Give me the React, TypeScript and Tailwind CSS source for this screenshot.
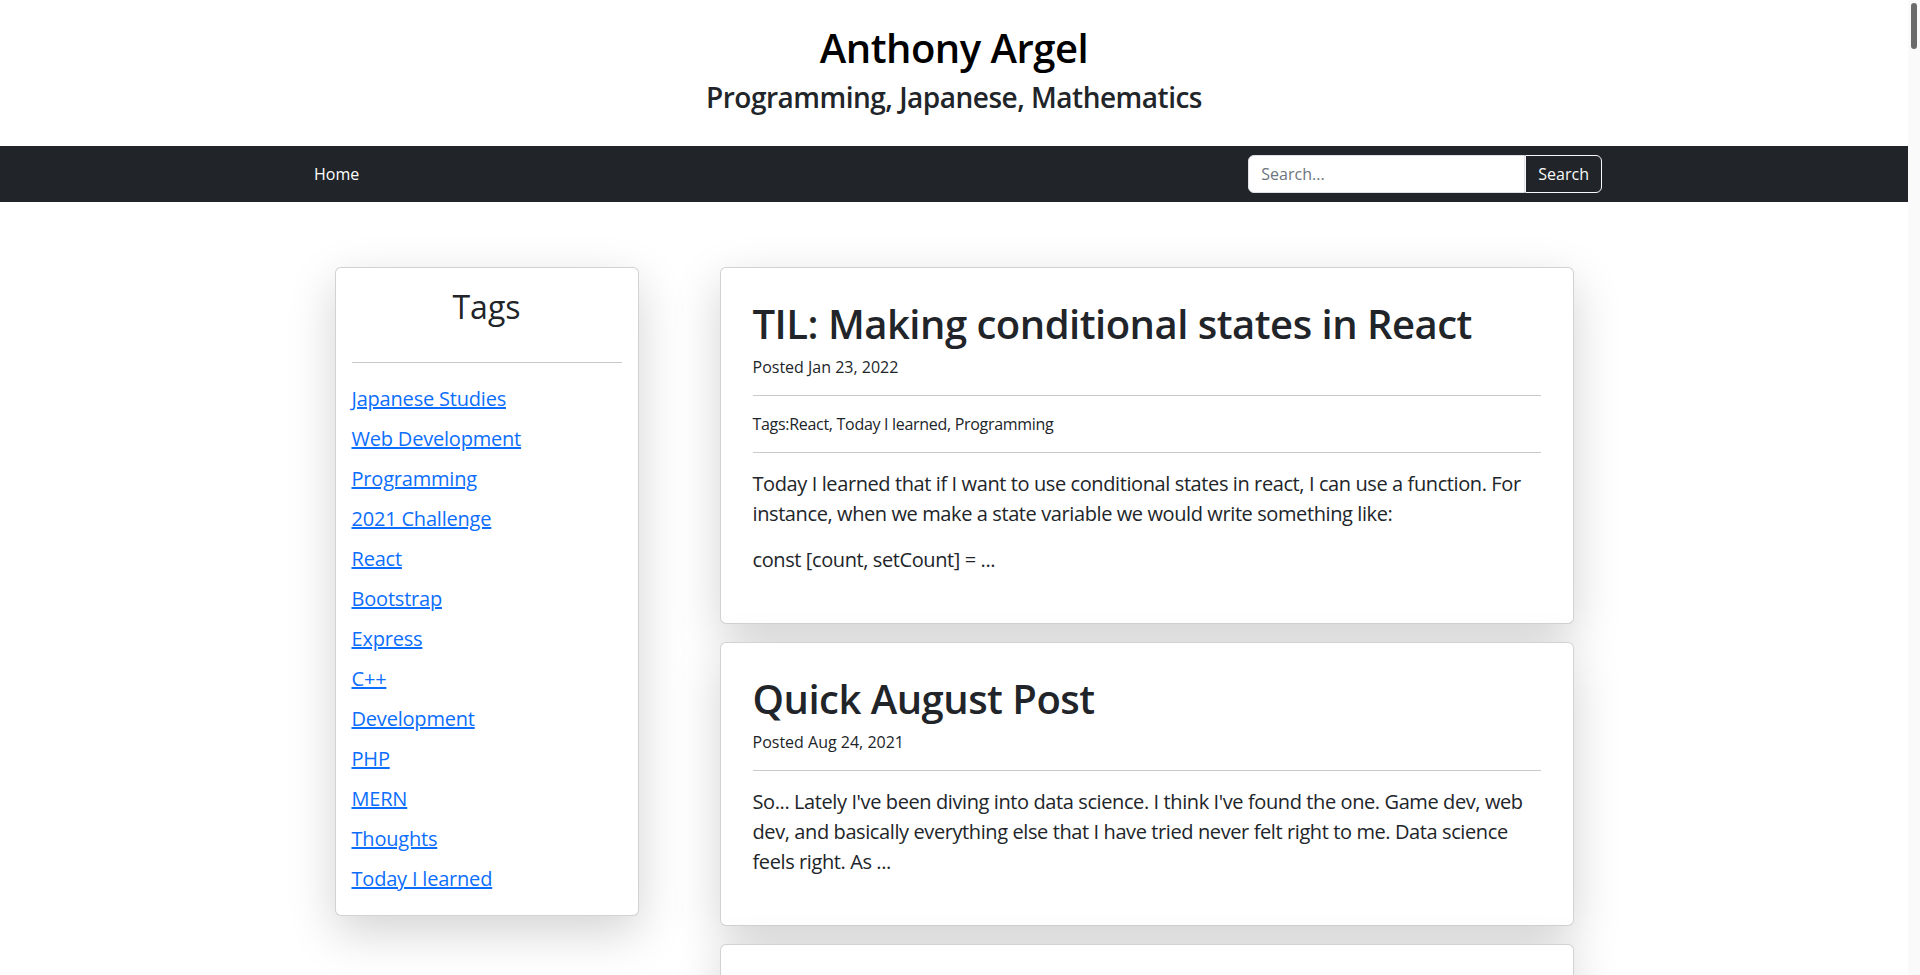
const tags = [
  'Japanese Studies',
  'Web Development',
  'Programming',
  '2021 Challenge',
  'React',
  'Bootstrap',
  'Express',
  'C++',
  'Development',
  'PHP',
  'MERN',
  'Thoughts',
  'Today I learned'
];

interface Post {
  readonly title: string;
  readonly date: string;
  readonly tags?: string;
  readonly body: string[];
}

const posts: Post[] = [
  {
    title: 'TIL: Making conditional states in React',
    date: 'Jan 23, 2022',
    tags: 'React, Today I learned, Programming',
    body: [
      'Today I learned that if I want to use conditional states in react, I can use a function. For instance, when we make a state variable we would write something like:',
      'const [count, setCount] = ...'
    ]
  },
  {
    title: 'Quick August Post',
    date: 'Aug 24, 2021',
    body: [
      "So... Lately I've been diving into data science. I think I've found the one. Game dev, web dev, and basically everything else that I have tried never felt right to me. Data science feels right. As ..."
    ]
  },
  {
    title: 'Back to Japanese Studies',
    date: 'Jul 02, 2021',
    tags: 'Japanese Studies, Thoughts',
    body: ['It has been a while since I last wrote about my Japanese studies ...']
  }
];

function PostCard({ post }: { readonly post: Post }) {
  return (
    <article className="rounded-[6px] border border-[rgba(0,0,0,0.175)] bg-white px-8 pt-8 pb-[32px] shadow-[0_16px_48px_rgba(0,0,0,0.175)]">
      <h1 className="mb-[7px] text-[40px] leading-[48px] font-semibold tracking-[-0.5px]">{post.title}</h1>
      <div className="text-base leading-6">Posted {post.date}</div>
      <hr className="my-4 border-[#c8c9ca]" />
      {post.tags && (
        <>
          <div className="text-base leading-6 tracking-[-0.3px]">Tags:{post.tags}</div>
          <hr className="my-4 border-[#c8c9ca]" />
        </>
      )}
      {post.body.map(text => (
        <p
          className="mb-4 text-xl leading-[30px] tracking-[-0.4px]"
          key={text}
        >
          {text}
        </p>
      ))}
    </article>
  );
}

export default function App() {
  return (
    <div className="flex h-[975px] overflow-hidden bg-white font-['Open_Sans',sans-serif] text-[#212529]">
      <div className="min-w-0 flex-1">
        {/* 站点标题 */}
        <header className="pt-6 pb-[32px] text-center">
          <h1 className="mb-2 text-[40px] leading-[48px] font-semibold tracking-[-0.5px] text-black">Anthony Argel</h1>
          <h3 className="text-[28px] leading-[34px] font-semibold tracking-[-0.5px]">Programming, Japanese, Mathematics</h3>
        </header>

        {/* 导航栏 */}
        <nav className="h-[56px] bg-[#212529]">
          <div className="mx-auto flex h-full w-[1320px] items-center justify-between px-3">
            <a
              className="px-2 text-base text-white"
              href="#"
            >
              Home
            </a>
            <form className="flex">
              <input
                className="h-[38px] w-[277px] rounded-l-[6px] border border-[#dee2e6] bg-white px-3 text-base outline-none placeholder:text-[#6c757d]"
                placeholder="Search..."
                type="text"
              />
              <button
                className="h-[38px] rounded-r-[6px] border border-[#f8f9fa] px-3 text-base text-[#f8f9fa]"
                type="button"
              >
                Search
              </button>
            </form>
          </div>
        </nav>

        <main className="flex items-start justify-center gap-[81px] pt-[65px]">
          {/* 标签列表 */}
          <aside className="w-[304px] rounded-[6px] border border-[rgba(0,0,0,0.175)] bg-white p-4 shadow-[0_16px_48px_rgba(0,0,0,0.175)]">
            <h2 className="mt-1 mb-[36px] text-center text-[32px] leading-[38px] font-normal">Tags</h2>
            <hr className="my-4 border-[#c8c9ca]" />
            <ul>
              {tags.map(tag => (
                <li
                  className="py-[5px] text-xl leading-[30px] tracking-[-0.2px]"
                  key={tag}
                >
                  <a
                    className="text-[#0d6efd] underline"
                    href="#"
                  >
                    {tag}
                  </a>
                </li>
              ))}
            </ul>
          </aside>

          <section className="flex w-[854px] flex-col gap-[18px]">
            {posts.map(post => (
              <PostCard
                key={post.title}
                post={post}
              />
            ))}
          </section>
        </main>
      </div>

      {/* 滚动条 */}
      <div className="w-[12px] shrink-0 bg-[#fafafa] pt-[3px]">
        <div className="ml-[3px] h-[46px] w-[6px] rounded-full bg-[#6b6b6b]" />
      </div>
    </div>
  );
}
